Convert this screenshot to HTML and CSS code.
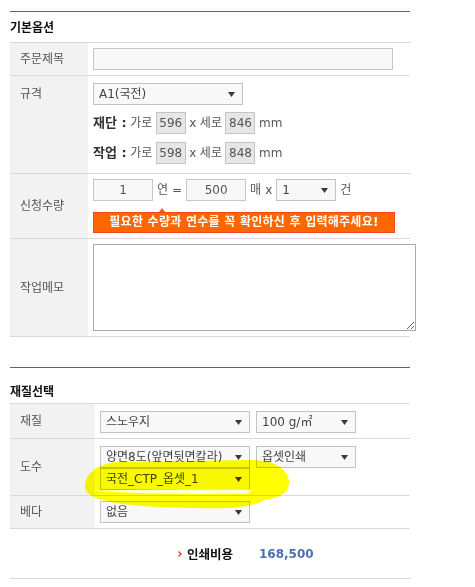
FILE: index.html
```html
<!DOCTYPE html>
<html lang="ko">
<head>
<meta charset="utf-8">
<title>옵션 선택</title>
<link rel="stylesheet" href="styles.css">
</head>
<body>
<div class="page">
  <section class="sec sec-basic">
    <h2 class="sec-title">기본옵션</h2>
    <div class="tbl tbl-basic">
      <div class="row row-title">
        <div class="lbl">주문제목</div>
        <div class="val"><input class="txt txt-title" type="text"></div>
      </div>
      <div class="row row-size">
        <div class="lbl lbl-top">규격</div>
        <div class="val val-size">
          <div class="sel sel-150"><span>A1(국전)</span><svg class="arr" width="7" height="5" viewBox="0 0 7 5"><polygon points="0,0 7,0 3.5,5"/></svg></div>
          <div class="dim"><b class="dk">재단 :</b><span>가로</span><span class="box">596</span><span>x</span><span>세로</span><span class="box">846</span><span>mm</span></div>
          <div class="dim dim-2"><b class="dk">작업 :</b><span>가로</span><span class="box">598</span><span>x</span><span>세로</span><span class="box">848</span><span>mm</span></div>
        </div>
      </div>
      <div class="row row-qty">
        <div class="lbl">신청수량</div>
        <div class="val">
          <div class="qty">
            <input class="txt num" type="text" value="1">
            <span>연</span><span>=</span>
            <input class="txt num" type="text" value="500">
            <span>매</span><span>x</span>
            <div class="sel sel-60"><span>1</span><svg class="arr" width="7" height="5" viewBox="0 0 7 5"><polygon points="0,0 7,0 3.5,5"/></svg></div>
            <span>건</span>
          </div>
          <div class="notice">필요한 수량과 연수를 꼭 확인하신 후 입력해주세요!</div>
        </div>
      </div>
      <div class="row row-memo">
        <div class="lbl">작업메모</div>
        <div class="val"><textarea class="memo"></textarea></div>
      </div>
    </div>
  </section>

  <section class="sec sec-material">
    <h2 class="sec-title">재질선택</h2>
    <div class="tbl tbl-material">
      <div class="row row-paper">
        <div class="lbl">재질</div>
        <div class="val val-top">
          <div class="sels">
            <div class="sel sel-150"><span>스노우지</span><svg class="arr" width="7" height="5" viewBox="0 0 7 5"><polygon points="0,0 7,0 3.5,5"/></svg></div>
            <div class="sel sel-100"><span>100 g/㎡</span><svg class="arr" width="7" height="5" viewBox="0 0 7 5"><polygon points="0,0 7,0 3.5,5"/></svg></div>
          </div>
        </div>
      </div>
      <div class="row row-color">
        <div class="lbl">도수</div>
        <div class="val val-top">
          <div class="sels">
            <div class="sel sel-150"><span>양면8도(앞면뒷면칼라)</span><svg class="arr" width="7" height="5" viewBox="0 0 7 5"><polygon points="0,0 7,0 3.5,5"/></svg></div>
            <div class="sel sel-100"><span>옵셋인쇄</span><svg class="arr" width="7" height="5" viewBox="0 0 7 5"><polygon points="0,0 7,0 3.5,5"/></svg></div>
          </div>
          <div class="sel sel-150"><span>국전_CTP_옵셋_1</span><svg class="arr" width="7" height="5" viewBox="0 0 7 5"><polygon points="0,0 7,0 3.5,5"/></svg></div>
        </div>
      </div>
      <div class="row row-beda">
        <div class="lbl">베다</div>
        <div class="val">
          <div class="sel sel-150"><span>없음</span><svg class="arr" width="7" height="5" viewBox="0 0 7 5"><polygon points="0,0 7,0 3.5,5"/></svg></div>
        </div>
      </div>
      <div class="row price">
        <svg class="price-mark" width="4" height="6" viewBox="0 0 4 6"><path d="M0.5,0.5 L3.2,3 L0.5,5.5" fill="none" stroke="#e8332a" stroke-width="1.2"/></svg>
        <span class="price-lbl">인쇄비용</span>
        <span class="price-val">168,500</span>
      </div>
    </div>
  </section>

  <svg class="highlight" width="215" height="60" viewBox="0 0 215 60">
    <path class="hl-fill" d="M5,33 C4,20 16,9 36,7 L172,5 C196,5 210,16 209,29 C208,39 198,43 184,45 C174,52 150,54 115,53 C60,52 8,49 5,33 Z"/>
  </svg>
  <svg class="highlight-gap" width="215" height="60" viewBox="0 0 215 60">
    <path d="M14,35.5 C60,34.5 130,34 172,34.5 L168,38.5 C120,39.5 60,39 14,35.5 Z" fill="#ffffff" opacity="0.85"/>
  </svg>
</div>
</body>
</html>
```

FILE: styles.css
```css
* { box-sizing: border-box; }
html, body { margin: 0; padding: 0; background: #fff; }
body {
  font-family: "DejaVu Sans", "Noto Sans CJK KR", sans-serif;
  font-size: 12px;
  line-height: 16px;
  color: #555;
}
.page {
  position: relative;
  width: 400px;
  margin-left: 10px;
  padding-top: 11px;
}
.sec { border-top: 1px solid #3b6ba6; }
.sec-title {
  margin: 0;
  font-family: "Noto Sans CJK KR", sans-serif;
  font-size: 12px;
  font-weight: bold;
  color: #111;
}
.sec-basic .sec-title { height: 30px; line-height: 30px; }
.sec-material { margin-top: 30px; }
.sec-material .sec-title { height: 35px; padding-top: 14px; line-height: 17px; }

.tbl { border-top: 1px solid #d9d9d9; }
.row { display: flex; border-bottom: 1px solid #d9d9d9; }
.lbl {
  flex: none;
  width: 78px;
  padding-left: 10px;
  background: #f2f2f2;
  display: flex;
  align-items: center;
  color: #555;
}
.tbl-material .lbl { width: 85px; }
.lbl-top { align-items: flex-start; padding-top: 7px; line-height: 22px; }
.val { flex: 1; padding: 5px 0 5px 5px; }
.val-size { padding-top: 7px; padding-bottom: 9px; }
.val-top { padding-top: 7px; }

.txt {
  display: block;
  height: 22px;
  margin: 0;
  padding: 0 5px;
  border: 1px solid #c6c6c6;
  background: #f8f8f8;
  font-family: "DejaVu Sans", "Noto Sans CJK KR", sans-serif;
  font-size: 12px;
  color: #555;
  outline: none;
}
.txt-title { width: 300px; }
.num { width: 60px; text-align: center; }

.sel {
  display: flex;
  align-items: center;
  justify-content: space-between;
  height: 22px;
  padding: 0 7px 0 5px;
  border: 1px solid #c3c3c3;
  background: #f8f8f8;
  color: #444;
  line-height: 20px;
  white-space: nowrap;
  overflow: hidden;
}
.sel span { overflow: hidden; }
.sel-150 { width: 150px; }
.sel-100 { width: 100px; }
.sel-60 { width: 60px; }
.arr { flex: none; fill: #3a3a3a; }
.sels { display: flex; gap: 6px; }

.dim {
  display: flex;
  align-items: center;
  gap: 3.5px;
  height: 22px;
  margin-top: 7px;
  line-height: 22px;
}
.dim-2 { margin-top: 8px; }
.dk { font-size: 13px; font-weight: bold; color: #333; }
.box {
  display: inline-block;
  width: 30px;
  height: 22px;
  line-height: 20px;
  border: 1px solid #c4c4c4;
  background: #e6e6e6;
  text-align: center;
  color: #555;
}

.qty { display: flex; align-items: center; gap: 4px; height: 22px; line-height: 22px; }

.notice {
  position: relative;
  width: 302px;
  height: 21px;
  margin-top: 11px;
  border: 1px solid #f0481a;
  background: #ff6600;
  color: #fff;
  font-weight: bold;
  letter-spacing: 0.25px;
  line-height: 19px;
  text-align: center;
  white-space: nowrap;
}
.notice::before {
  content: "";
  position: absolute;
  left: 65px;
  top: -5px;
  border-left: 3px solid transparent;
  border-right: 3px solid transparent;
  border-bottom: 4px solid #f35c12;
}

.memo {
  display: block;
  width: 323px;
  height: 87px;
  margin: 0;
  border: 1px solid #aaa;
  background: #fff;
  resize: both;
  outline: none;
}

.price {
  height: 50px;
  align-items: center;
  padding-left: 168px;
}
.price-mark { flex: none; margin-right: 5px; }
.price-lbl {
  font-family: "Noto Sans CJK KR", sans-serif;
  font-size: 12.5px;
  font-weight: bold;
  color: #111;
  margin-right: 26px;
}
.price-val {
  font-family: "DejaVu Sans", sans-serif;
  font-size: 12px;
  font-weight: bold;
  color: #4a71ae;
}

.highlight, .highlight-gap {
  position: absolute;
  left: 70px;
  top: 455px;
  pointer-events: none;
}
.highlight { mix-blend-mode: multiply; }
.hl-fill { fill: #ffff00; }
```
